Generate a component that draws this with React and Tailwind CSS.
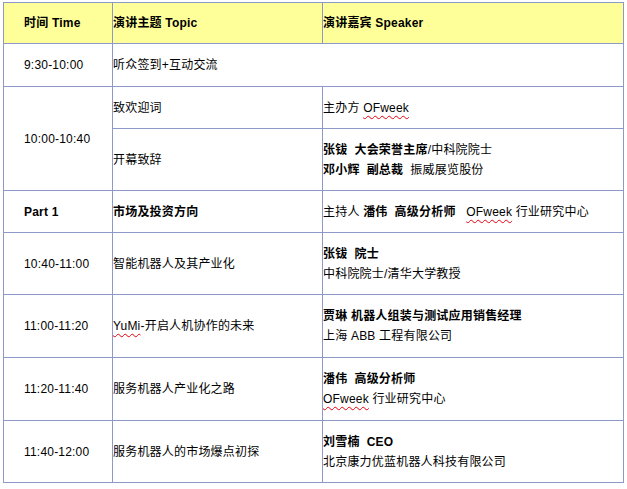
import React from 'react';

// Agenda table: time / topic / speaker
const Sq = ({ children }) => (
  <span className="underline decoration-wavy decoration-red-600 decoration-1 underline-offset-[3px]">
    {children}
  </span>
);

const rows = [
  {
    h: 'h-[62px]',
    time: '10:40-11:00',
    topic: '智能机器人及其产业化',
    speaker: [<b key="a">张钹&nbsp; 院士</b>, <span key="b">中科院院士/清华大学教授</span>],
  },
  {
    h: 'h-[63px]',
    time: '11:00-11:20',
    topic: (
      <>
        <Sq>YuMi</Sq>-开启人机协作的未来
      </>
    ),
    speaker: [
      <b key="a">贾琳 机器人组装与测试应用销售经理</b>,
      <span key="b">上海 ABB 工程有限公司</span>,
    ],
  },
  {
    h: 'h-[63px]',
    time: '11:20-11:40',
    topic: '服务机器人产业化之路',
    speaker: [
      <b key="a">潘伟&nbsp; 高级分析师</b>,
      <span key="b">
        <Sq>OFweek</Sq> 行业研究中心
      </span>,
    ],
  },
  {
    h: 'h-[62px]',
    time: '11:40-12:00',
    topic: '服务机器人的市场爆点初探',
    speaker: [<b key="a">刘雪楠&nbsp; CEO</b>, <span key="b">北京康力优蓝机器人科技有限公司</span>],
  },
];

const cell = 'border border-[#8e99c9] p-0 align-middle text-left';
const timeCell = `${cell} pl-[20px]`;

export default function App() {
  return (
    <div className="w-[627px] h-[489px] bg-white pt-[2px] pl-[3px] overflow-hidden">
      <table
        className="table-fixed border-collapse w-[620px] text-[12px] leading-[20px] tracking-[0.2px] text-black"
        style={{ fontFamily: '"Liberation Sans", "Noto Sans CJK SC", sans-serif' }}
      >
        <colgroup>
          <col className="w-[109px]" />
          <col className="w-[210px]" />
          <col className="w-[301px]" />
        </colgroup>
        <tbody>
          <tr className="h-[41px] bg-[#ffff99] font-bold">
            <td className={timeCell}>时间 Time</td>
            <td className={cell}>演讲主题 Topic</td>
            <td className={cell}>演讲嘉宾 Speaker</td>
          </tr>
          <tr className="h-[43px]">
            <td className={timeCell}>9:30-10:00</td>
            <td className={cell} colSpan={2}>听众签到+互动交流</td>
          </tr>
          <tr className="h-[42px]">
            <td className={timeCell} rowSpan={2}>10:00-10:40</td>
            <td className={cell}>致欢迎词</td>
            <td className={cell}>
              主办方 <Sq>OFweek</Sq>
            </td>
          </tr>
          <tr className="h-[62px]">
            <td className={cell}>开幕致辞</td>
            <td className={cell}>
              <div>
                <b>张钹&nbsp; 大会荣誉主席</b>/中科院院士
              </div>
              <div>
                <b>邓小辉&nbsp; 副总裁</b>&nbsp; 振威展览股份
              </div>
            </td>
          </tr>
          <tr className="h-[42px] font-bold">
            <td className={timeCell}>Part 1</td>
            <td className={cell}>市场及投资方向</td>
            <td className={`${cell} font-normal whitespace-pre`}>
              主持人 <b>潘伟  高级分析师</b>{'   '}
              <Sq>OFweek</Sq> 行业研究中心
            </td>
          </tr>
          {rows.map((r) => (
            <tr key={r.time} className={r.h}>
              <td className={timeCell}>{r.time}</td>
              <td className={cell}>{r.topic}</td>
              <td className={cell}>
                {r.speaker.map((s, i) => (
                  <div key={i}>{s}</div>
                ))}
              </td>
            </tr>
          ))}
        </tbody>
      </table>
    </div>
  );
}
